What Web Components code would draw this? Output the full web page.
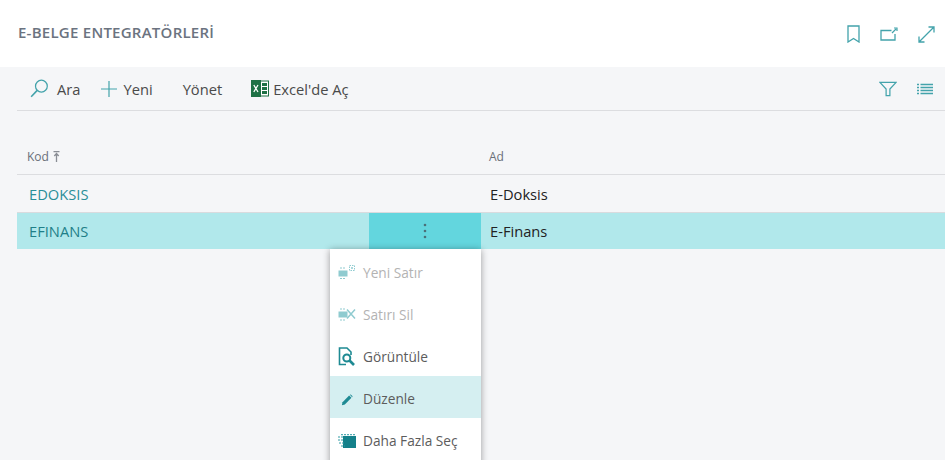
<!DOCTYPE html>
<html lang="tr"><head><meta charset="utf-8"><title>E-Belge Entegratörleri</title>
<style>
html,body{margin:0;height:100%;overflow:hidden}
body{font-family:"Open Sans","Noto Sans","Liberation Sans",sans-serif;background:#f5f6f8;color:#333}
</style></head><body>
<bc-page>
  <bc-header title="E-BELGE ENTEGRATÖRLERİ"></bc-header>
  <bc-toolbar></bc-toolbar>
  <bc-list></bc-list>
</bc-page>
<script>
const TEAL='#43a3ab';
const icons={
 search:`<svg width="19" height="19" viewBox="0 0 20 20" fill="none" stroke="${TEAL}" stroke-width="1.3"><circle cx="12" cy="7.500" r="6.200"/><path d="M7.600 12 1.200 18.700" stroke-width="1.700"/></svg>`,
 plus:`<svg width="18" height="18" viewBox="0 0 18 18" fill="none" stroke="${TEAL}" stroke-width="1.200"><path d="M9 1v16M1 9h16"/></svg>`,
 excel:`<svg width="18" height="17" viewBox="0 0 18 17"><rect x="1" y="1" width="16.500" height="15" fill="#fff" stroke="#1e7145"/><rect x="11" y="3" width="5" height="3" fill="#1e7145"/><rect x="11" y="7" width="5" height="3" fill="#1e7145"/><rect x="11" y="11" width="5" height="3" fill="#1e7145"/><path d="M0 0h10v17H0z" fill="#1e7145"/><path d="M2.800 5 7 12M7 5 2.800 12" stroke="#fff" stroke-width="1.300"/></svg>`,
 bookmark:`<svg width="13" height="18" viewBox="0 0 13 18" fill="none" stroke="${TEAL}" stroke-width="1.300"><path d="M1 1h11v16l-5.500-3.500L1 17z"/></svg>`,
 popout:`<svg width="18" height="14" viewBox="0 0 18 14" fill="none" stroke="${TEAL}" stroke-width="1.300"><path d="M11.500 3.500H1v9.500h14V7"/><path d="M12 6l4-4M14 1h3v3" stroke-width="1.200"/></svg>`,
 expand:`<svg width="17" height="17" viewBox="0 0 17 17" fill="none" stroke="${TEAL}" stroke-width="1.300"><path d="M1.500 15.500 15.500 1.500M10.500 1H16v5.500M1 10.500V16h5.500"/></svg>`,
 filter:`<svg width="18" height="16" viewBox="0 0 19 16" fill="none" stroke="${TEAL}" stroke-width="1.300"><path d="M1 1h17l-6.500 7v7h-4V8z"/></svg>`,
 lines:`<svg width="16" height="12" viewBox="0 0 16 12" stroke="${TEAL}" stroke-width="1.500"><path d="M3.500 1.500H16M3.500 4.500H16M3.500 7.500H16M3.500 10.500H16"/><path d="M0 1.500H2M0 4.500H2M0 7.500H2M0 10.500H2"/></svg>`,
 newline:`<svg width="18" height="16" viewBox="0 0 18 16" fill="none" stroke="#8fcbd0"><rect x="1" y="7" width="8" height="5" fill="#8fcbd0"/><path d="M2 4h5M2 14.500h5" stroke-dasharray="2 1"/><rect x="11.500" y="1.500" width="5" height="5" stroke-dasharray="1.500 1"/><path d="M14 3v2M13 4h2"/></svg>`,
 delline:`<svg width="18" height="16" viewBox="0 0 18 16" fill="none" stroke="#8fcbd0"><rect x="1" y="6" width="8" height="5" fill="#8fcbd0"/><path d="M2 3h5M2 14h5" stroke-dasharray="2 1"/><path d="M9 3.500l8 9M17 3.500l-8 9" stroke-width="1.500"/></svg>`,
 view:`<svg width="18" height="19" viewBox="0 0 18 19" fill="none" stroke="#1e8a93" stroke-width="1.600"><path d="M8 17.500H1.500V1H9l4 4v3"/><circle cx="8.800" cy="11" r="3.500" stroke-width="2"/><path d="M11.500 13.500 16 18" stroke-width="2.600"/></svg>`,
 edit:`<svg width="12" height="12" viewBox="0 0 14 14" fill="#1e8a93" style="margin-top:3px"><path d="M1 13l.8-3.500L9.500 1.800l2.700 2.700-7.700 7.700z"/><path d="M10.300 1l1-.5 2.200 2.200-.5 1z"/></svg>`,
 select:`<svg width="18" height="14" viewBox="0 0 18 14" style="margin-top:2px"><rect x="5" y="2" width="13" height="12" fill="#14808a"/><path d="M0 3h5M0 6h5M1 9h5M3 12h4M3 .700h14" stroke="#2f9aa3" stroke-dasharray="2 1" fill="none"/></svg>`
};
function def(name,css,html){
  customElements.define(name,class extends HTMLElement{
    connectedCallback(){
      if(this.shadowRoot)return;
      const r=this.attachShadow({mode:'open'});
      r.innerHTML=`<style>${css}</style>`+(typeof html==='function'?html(this):html);
    }
  });
}
def('bc-page',`:host{display:flex;flex-direction:column;height:460px;overflow:hidden}`,`<slot></slot>`);
def('bc-header',`:host{display:flex;align-items:center;justify-content:space-between;height:67px;background:#fff;padding:0 10px 0 18px;box-sizing:border-box}
 h1{margin:0 0 3px;font-size:15px;font-weight:600;color:#6b7380;letter-spacing:.25px}
 .i{display:flex;align-items:center;gap:20px;margin-top:1px}svg{display:block}`,
 h=>`<h1>${h.getAttribute('title')}</h1><div class="i"><span style="margin-right:0">${icons.bookmark}</span><span>${icons.popout}</span><span>${icons.expand}</span></div>`);
def('bc-btn',`:host{display:inline-flex;align-items:center;gap:6px;font-size:14.700px;color:#4a4a4a;white-space:nowrap}svg{display:block}`,
 h=>`${icons[h.getAttribute('icon')]||''}<span><slot></slot></span>`);
def('bc-toolbar',`:host{display:flex;align-items:center;height:44px;margin:0 0 0 17px;border-bottom:1.500px solid #dcdde0;box-sizing:border-box;padding:0 12px 0 13px}
 .l{display:flex;align-items:center;gap:21px;flex:1}.r{display:flex;align-items:center;gap:20px}svg{display:block}`,
 `<div class="l"><bc-btn icon="search" style="gap:8px;margin-right:-1px">Ara</bc-btn><bc-btn icon="plus" style="gap:5px">Yeni</bc-btn><bc-btn style="margin-left:9px;margin-right:8px">Yönet</bc-btn><bc-btn icon="excel" style="gap:4px">Excel'de Aç</bc-btn></div><div class="r">${icons.filter}${icons.lines}</div>`);
def('bc-row',`:host{display:grid;grid-template-columns:352px 112px 1fr;height:37px;font-size:14.700px;align-items:center;color:#222;padding-top:1px;box-sizing:border-box}
 :host([selected]){background:#b1e8eb;border-top:1.500px solid #d9dbde;padding-top:0}
 .k{padding-left:12px;color:#2b8f98}:host([selected]) .k{color:#1f7f88}
 .a{align-self:stretch;display:flex;align-items:center;justify-content:center}
 :host([selected]) .a{background:#63d6de}
 .d{padding-left:9px}
 svg{display:block}`,
 h=>`<div class="k">${h.getAttribute('code')}</div><div class="a">${h.hasAttribute('selected')?`<svg width="4" height="16" viewBox="0 0 4 16" fill="#4b7078"><circle cx="2" cy="2" r="1.300"/><circle cx="2" cy="8" r="1.300"/><circle cx="2" cy="14" r="1.300"/></svg>`:''}</div><div class="d">${h.getAttribute('name')}</div>`);
def('bc-menu-item',`:host{display:flex;align-items:center;height:42px;font-size:13.700px;color:#5c5c5c;padding-left:7px;gap:7px}
 :host([disabled]){color:#b3b3b3}:host([active]){background:#d5eff1}
 .t{padding-top:2px}
 .i{width:19px;display:flex;justify-content:center;padding-top:2px}svg{display:block}`,
 h=>`<span class="i">${icons[h.getAttribute('icon')]}</span><span class="t"><slot></slot></span>`);
def('bc-menu',`:host{display:block;position:absolute;left:313px;top:37px;width:151px;background:#fff;box-shadow:0 1px 7px rgba(0,0,0,.38);height:230px;padding-top:1px}`,`<slot></slot>`);
def('bc-list',`:host{display:block;position:relative;margin-left:17px;flex:1;overflow:visible}
 .head{display:grid;grid-template-columns:464px 1fr;height:64px;box-sizing:border-box;border-bottom:1.500px solid #dcdde0;font-size:12px;color:#6a6f78;padding-bottom:9px;align-items:end}
 .head div:first-child{padding-left:10px;display:flex;align-items:center;gap:4px}.head div:last-child{padding-left:8px}
 svg{display:block}`,
 `<div class="head"><div>Kod<svg width="7" height="11" viewBox="0 0 7 11" fill="none" stroke="#8a8e95" stroke-width="1.300"><path d="M.500 .700h6M3.500 11V2.500M1.300 5l2.200-2.500L5.700 5"/></svg></div><div>Ad</div></div>
 <bc-row code="EDOKSIS" name="E-Doksis"></bc-row>
 <div style="position:relative"><bc-row code="EFINANS" name="E-Finans" selected></bc-row>
 <bc-menu>
  <bc-menu-item icon="newline" disabled>Yeni Satır</bc-menu-item>
  <bc-menu-item icon="delline" disabled>Satırı Sil</bc-menu-item>
  <bc-menu-item icon="view">Görüntüle</bc-menu-item>
  <bc-menu-item icon="edit" active>Düzenle</bc-menu-item>
  <bc-menu-item icon="select">Daha Fazla Seç</bc-menu-item>
 </bc-menu></div>`);
</script>
</body></html>
